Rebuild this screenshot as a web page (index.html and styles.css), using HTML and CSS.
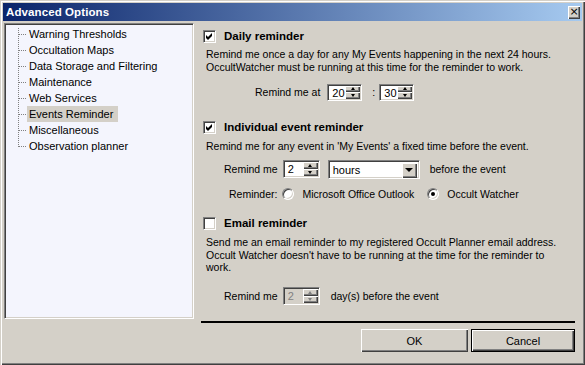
FILE: index.html
```html
<!DOCTYPE html>
<html>
<head>
<meta charset="utf-8">
<link rel="stylesheet" href="styles.css">
</head>
<body>
<div class="window">
  <div class="titlebar">
    <span class="title">Advanced Options</span>
    <span class="close">×</span>
  </div>
  <div class="main">
    <div class="tree">
      <ul class="tree-list">
        <li><span class="label">Warning Thresholds</span></li>
        <li><span class="label">Occultation Maps</span></li>
        <li><span class="label">Data Storage and Filtering</span></li>
        <li><span class="label">Maintenance</span></li>
        <li><span class="label">Web Services</span></li>
        <li><span class="label selected">Events Reminder</span></li>
        <li><span class="label">Miscellaneous</span></li>
        <li class="last"><span class="label">Observation planner</span></li>
      </ul>
    </div>
    <div class="right">
      <div class="content">
        <div class="header h1">
          <span class="checkbox"><svg width="7" height="7" viewBox="0 0 7 7"><polygon points="0,2 2,4 6,0 6,3 2,7 0,5" fill="#000"/></svg></span>
          <span class="htext">Daily reminder</span>
        </div>
        <p class="desc d1">Remind me once a day for any My Events happening in the next 24 hours.<br>OccultWatcher must be running at this time for the reminder to work.</p>
        <div class="row time-row">
          <span class="lbl">Remind me at</span>
          <span class="spin"><span class="field">20</span><span class="spin-btns"><span class="sb up"></span><span class="sb down"></span></span></span>
          <span class="colon">:</span>
          <span class="spin"><span class="field">30</span><span class="spin-btns"><span class="sb up"></span><span class="sb down"></span></span></span>
        </div>
        <div class="header h2">
          <span class="checkbox"><svg width="7" height="7" viewBox="0 0 7 7"><polygon points="0,2 2,4 6,0 6,3 2,7 0,5" fill="#000"/></svg></span>
          <span class="htext">Individual event reminder</span>
        </div>
        <p class="desc d2">Remind me for any event in 'My Events' a fixed time before the event.</p>
        <div class="row remind-row">
          <span class="lbl">Remind me</span>
          <span class="spin small"><span class="field">2</span><span class="spin-btns"><span class="sb up"></span><span class="sb down"></span></span></span>
          <span class="combo"><span class="field">hours</span><span class="combo-btn"></span></span>
          <span class="after">before the event</span>
        </div>
        <div class="row radio-row">
          <span class="lbl">Reminder:</span>
          <span class="radio"></span>
          <span class="rlabel">Microsoft Office Outlook</span>
          <span class="radio checked"></span>
          <span class="rlabel">Occult Watcher</span>
        </div>
        <div class="header h3">
          <span class="checkbox"></span>
          <span class="htext">Email reminder</span>
        </div>
        <p class="desc d3">Send me an email reminder to my registered Occult Planner email address.<br>Occult Watcher doesn't have to be running at the time for the reminder to<br>work.</p>
        <div class="row remind3-row">
          <span class="lbl">Remind me</span>
          <span class="spin small disabled"><span class="field">2</span><span class="spin-btns"><span class="sb up"></span><span class="sb down"></span></span></span>
          <span class="after">day(s) before the event</span>
        </div>
      </div>
      <div class="separator"></div>
      <div class="buttons">
        <span class="btn">OK</span>
        <span class="btn default">Cancel</span>
      </div>
    </div>
  </div>
</div>
</body>
</html>
```
FILE: styles.css
```css
html, body {
  margin: 0;
  padding: 0;
  background: #d4d0c8;
}
body {
  font-family: "Liberation Sans", Arial, sans-serif;
  font-size: 10.5px;
  color: #000;
}
.window {
  width: 585px;
  height: 365px;
  box-sizing: border-box;
  padding: 3px;
  background: #d4d0c8;
  box-shadow: inset 1px 1px #d4d0c8, inset 2px 2px #fff, inset -1px -1px #404040, inset -2px -2px #808080;
  display: flex;
  flex-direction: column;
}
.titlebar {
  height: 18px;
  background: linear-gradient(to right, #0a246a, #a6caf0);
  display: flex;
  align-items: center;
  justify-content: space-between;
  padding-left: 3px;
}
.title {
  color: #fff;
  font-weight: bold;
  font-size: 11.5px;
  letter-spacing: 0.1px;
}
.close {
  width: 12px;
  height: 13px;
  margin-right: 2px;
  background: #d4d0c8;
  box-shadow: inset 1px 1px #fff, inset -1px -1px #404040, inset -2px -2px #808080;
  font-size: 11px;
  line-height: 12px;
  text-align: center;
  color: #000;
  font-family: "DejaVu Sans", sans-serif;
}
.main {
  display: flex;
  margin-top: 2px;
  flex: 1;
}
.tree {
  width: 190px;
  height: 296px;
  margin-left: 1px;
  box-sizing: border-box;
  background: #f4f5fd;
  border-style: solid;
  border-width: 1px;
  border-color: #808080 #fff #fff #808080;
  box-shadow: inset 1px 1px #404040, inset -1px -1px #d4d0c8;
  padding-top: 2px;
}
.tree-list {
  list-style: none;
  margin: 0;
  padding: 0;
}
.tree-list li {
  display: flex;
  height: 16px;
  align-items: center;
  font-size: 11px;
}
.tree-list li::before {
  content: "";
  flex: 0 0 9px;
  height: 16px;
  margin-left: 13px;
  background-image:
    repeating-linear-gradient(to bottom, #808080 0 1px, transparent 1px 2px),
    repeating-linear-gradient(to right, #808080 0 1px, transparent 1px 2px);
  background-size: 1px 16px, 8px 1px;
  background-position: 0 0, 1px 8px;
  background-repeat: no-repeat;
}
.tree-list li:first-child::before {
  background-size: 1px 14px, 8px 1px;
  background-position: 0 2px, 1px 8px;
}
.tree-list li.last::before {
  background-size: 1px 9px, 8px 1px;
  background-position: 0 0, 1px 8px;
}
.label {
  padding: 0 5px 0 2px;
  height: 16px;
  line-height: 16px;
  white-space: nowrap;
}
.label.selected {
  background: #d4d0c8;
}
.right {
  margin-left: 7px;
  width: 374px;
  display: flex;
  flex-direction: column;
}
.content {
  height: 298px;
}
.header {
  display: flex;
  align-items: center;
  height: 16px;
  padding-left: 2px;
}
.h1 { margin-top: 5px; }
.h2 { margin-top: 17px; }
.h3 { margin-top: 13px; }
.checkbox {
  width: 13px;
  height: 13px;
  box-sizing: border-box;
  background: #fff;
  border-style: solid;
  border-width: 1px;
  border-color: #808080 #fff #fff #808080;
  box-shadow: inset 1px 1px #404040, inset -1px -1px #d4d0c8;
  display: flex;
  align-items: center;
  justify-content: center;
}
.checkbox svg { display: block; }
.htext {
  font-weight: bold;
  margin-left: 8px;
  font-size: 11.5px;
}
.desc {
  margin: 0;
  padding-left: 5px;
  line-height: 12.5px;
  white-space: nowrap;
}
.d1 { margin-top: 4px; }
.d2 { margin-top: 5px; }
.d3 { margin-top: 5px; }
.row {
  display: flex;
  align-items: center;
  height: 20px;
  white-space: nowrap;
}
.time-row {
  margin-top: 9px;
  padding-left: 54px;
}
.time-row .lbl { margin-right: 7px; }
.colon { margin: 0 4px 0 10px; }
.remind-row {
  margin-top: 6.5px;
  padding-left: 23px;
}
.remind-row .lbl, .remind3-row .lbl { margin-right: 5px; }
.spin {
  display: flex;
  width: 35px;
  height: 17px;
  box-sizing: border-box;
  background: #fff;
  border-style: solid;
  border-width: 1px;
  border-color: #808080 #fff #fff #808080;
  box-shadow: inset 1px 1px #404040, inset -1px -1px #d4d0c8;
  padding: 1px;
}
.spin.small { width: 37px; height: 18px; }
.spin .field {
  flex: 1;
  padding-left: 3px;
  line-height: 15px;
  font-size: 11px;
}
.spin-btns {
  display: flex;
  flex-direction: column;
  width: 15px;
}
.sb {
  flex: 1;
  background: #d4d0c8;
  box-shadow: inset 1px 1px #fff, inset -1px -1px #404040, inset -2px -2px #808080;
  display: flex;
  align-items: center;
  justify-content: center;
}
.sb::after {
  content: "";
  border-left: 2.5px solid transparent;
  border-right: 2.5px solid transparent;
}
.sb.up::after { border-bottom: 3px solid #000; }
.sb.down::after { border-top: 3px solid #000; }
.spin.disabled { background: #d4d0c8; }
.spin.disabled .field { color: #808080; }
.spin.disabled .sb.up::after { border-bottom-color: #808080; }
.spin.disabled .sb.down::after { border-top-color: #808080; }
.combo {
  display: flex;
  width: 92px;
  height: 19px;
  margin-left: 8px;
  box-sizing: border-box;
  background: #fff;
  border-style: solid;
  border-width: 1px;
  border-color: #808080 #fff #fff #808080;
  box-shadow: inset 1px 1px #404040, inset -1px -1px #d4d0c8;
  padding: 2px;
}
.combo .field {
  flex: 1;
  padding-left: 2px;
  line-height: 15px;
  font-size: 11px;
}
.combo-btn {
  width: 15px;
  height: 15px;
  background: #d4d0c8;
  box-shadow: inset 1px 1px #fff, inset -1px -1px #404040, inset -2px -2px #808080;
  display: flex;
  align-items: center;
  justify-content: center;
}
.combo-btn::after {
  content: "";
  border-left: 4px solid transparent;
  border-right: 4px solid transparent;
  border-top: 4px solid #000;
}
.after { margin-left: 10px; }
.remind3-row .after { margin-left: 11px; }
.radio-row {
  margin-top: 7px;
  height: 16px;
  padding-left: 28px;
}
.radio-row .lbl { margin-right: 5px; }
.radio {
  width: 12px;
  height: 12px;
  box-sizing: border-box;
  border-radius: 50%;
  background: #fff;
  border-style: solid;
  border-width: 1px;
  border-color: #808080 #fff #fff #808080;
  box-shadow: inset 1px 1px #404040, inset -1px -1px #d4d0c8;
  display: flex;
  align-items: center;
  justify-content: center;
}
.radio.checked::after {
  content: "";
  width: 4px;
  height: 4px;
  border-radius: 50%;
  background: #000;
}
.rlabel { margin-left: 8px; margin-right: 13px; }
.remind3-row {
  margin-top: 12.5px;
  padding-left: 23px;
}
.separator {
  height: 2px;
  background: #000;
}
.buttons {
  display: flex;
  justify-content: flex-end;
  gap: 3px;
  margin-top: 6px;
}
.btn {
  width: 107px;
  height: 23px;
  box-sizing: border-box;
  background: #d4d0c8;
  box-shadow: inset 1px 1px #fff, inset -1px -1px #404040, inset -2px -2px #808080;
  display: flex;
  align-items: center;
  justify-content: center;
  font-size: 11px;
}
.btn.default {
  width: 104px;
  border: 1px solid #000;
}
```
